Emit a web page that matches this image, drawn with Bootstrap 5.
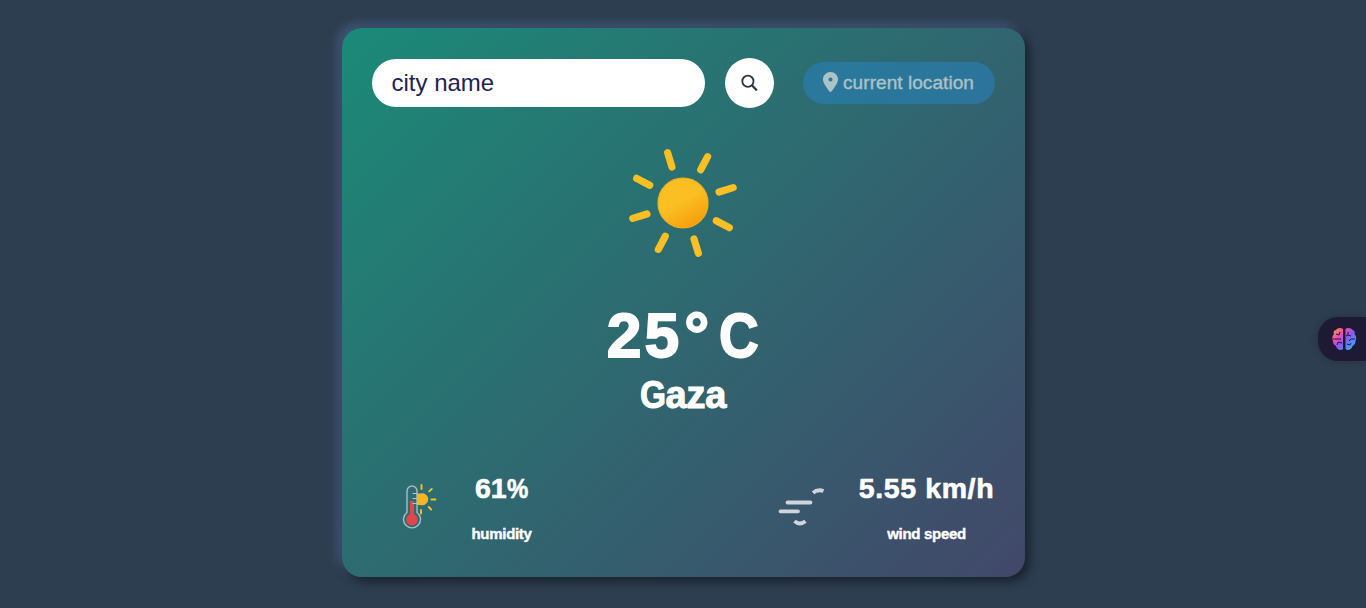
<!DOCTYPE html>
<html lang="en">
<head>
<meta charset="utf-8">
<meta name="viewport" content="width=device-width, initial-scale=1">
<title>Weather</title>
<link href="https://cdn.jsdelivr.net/npm/bootstrap@5.3.0/dist/css/bootstrap.min.css" rel="stylesheet">
<style>
body{background:#2d3e50;height:608px;overflow:hidden;font-family:"Liberation Sans",Arial,sans-serif}
.weather{width:683px;height:549px;margin-top:28px;padding:30px;border-radius:20px;color:#fff;
 background:linear-gradient(135deg,#1b8a77,#424769);
 box-shadow:5px 5px 10px #1a242f,-5px -5px 10px #405577}
.city{width:333px;height:48px;border:0;border-radius:30px;padding:0 20px;font-size:24px;color:#1f2253}
.city::placeholder{color:#1f2253;opacity:1}
.find{width:49px;height:50px;background:#fff;margin-left:20px}
.locate{width:192px;height:42px;border-radius:30px;background:#2980b9;opacity:.6;color:#fff;font-size:19px;margin-left:29px;letter-spacing:.06px;-webkit-text-stroke:.3px #fff}
.bold-text{font-weight:700;line-height:1;white-space:nowrap;-webkit-text-stroke:.4px #fff}
.temp{font-size:62.5px;margin-top:41px;height:64px;-webkit-text-stroke-width:1.8px;letter-spacing:3px}
.degree{letter-spacing:10px;margin-left:2px}
.celsius{display:inline-block;letter-spacing:0;transform:scaleX(.88);transform-origin:left;margin-right:-5px}
.town{font-size:38px;margin-top:8px;letter-spacing:-.2px;-webkit-text-stroke-width:1px}
.town-initial{display:inline-block;transform:scaleX(.88);transform-origin:left;margin-right:-3.5px}
.reading{font-size:28.5px;-webkit-text-stroke-width:.6px}
.pct{display:inline-block;transform:scaleX(.84);transform-origin:left;margin-right:-4px}
.speed{letter-spacing:.6px}
.caption-text{font-size:15px;letter-spacing:-.3px;margin-top:23.5px}
.brain-tab{right:0;top:317px;width:48px;height:44px;background:#1e1a36;border-radius:20px 0 0 20px;box-shadow:0 0 8px #0003}
</style>
</head>
<body>
<main class="weather mx-auto d-flex flex-column">
  <div class="d-flex align-items-center" style="height:50px">
    <input class="city" type="text" placeholder="city name" aria-label="city name">
    <button class="find btn rounded-circle border-0 p-0 d-flex align-items-center justify-content-center" aria-label="Search">
      <svg width="18" height="18" viewBox="0 0 18 18" fill="none" stroke="#2b3544" stroke-width="1.8"><circle cx="7.9" cy="7.2" r="5.6"/><path d="M11.9 11.2 16.9 16.4" stroke-width="2.2"/></svg>
    </button>
    <button class="locate border-0 p-0 d-flex align-items-center justify-content-center">
      <svg style="margin-right:5px;margin-bottom:2px" width="15" height="20" viewBox="0 0 384 512" preserveAspectRatio="none" fill="#fff"><path d="M215.7 499.2C267 435 384 279.4 384 192 384 86 298 0 192 0S0 86 0 192c0 87.4 117 243 168.3 307.2 12.3 15.3 35.1 15.3 47.4 0zM192 140a52 52 0 1 1 0 104 52 52 0 1 1 0-104z"/></svg>
      <span>current location</span>
    </button>
  </div>
  <div class="d-flex justify-content-center" style="margin-top:35px">
    <svg width="120" height="120" viewBox="-60 -60 120 120">
      <defs>
        <linearGradient id="sun" x1=".25" y1=".07" x2=".75" y2=".93"><stop offset="0" stop-color="#fbbf24"/><stop offset=".45" stop-color="#fbbf24"/><stop offset="1" stop-color="#f59e0b"/></linearGradient>
        <path id="ray" d="M0-37.7V-52.5"/>
      </defs>
      <circle r="25" fill="url(#sun)" stroke="#f8af18" stroke-width="1.2"/>
      <g stroke="#fbbf24" stroke-width="7.2" stroke-linecap="round" transform="rotate(-17)">
        <use href="#ray"/><use href="#ray" transform="rotate(45)"/><use href="#ray" transform="rotate(90)"/><use href="#ray" transform="rotate(135)"/><use href="#ray" transform="rotate(180)"/><use href="#ray" transform="rotate(225)"/><use href="#ray" transform="rotate(270)"/><use href="#ray" transform="rotate(315)"/>
      </g>
    </svg>
  </div>
  <div class="temp bold-text text-center">25<span class="degree">°</span><span class="celsius">C</span></div>
  <div class="town bold-text text-center"><span class="town-initial">G</span>aza</div>
  <div class="d-flex justify-content-between" style="margin-top:60px">
    <div class="d-flex">
      <svg width="100" height="70" viewBox="372 474 100 70" fill="none">
        <g stroke="#fbbf24" stroke-width="1.9" stroke-linecap="round"><path d="M421.5 485v4M429.3 491.3l2.500-2.400M431.500 499.500h4M428.700 507l2.400 2.500M421 510v3.500"/></g>
        <path d="M417 493.500h3.500a6 6 0 1 1 0 11.500H417z" fill="#fbb521"/>
        <path d="M407 512.500v-21.500a5 5 0 0 1 10 0v21.500a8.500 8.500 0 1 1-10 0z" stroke="#a8bcc5" stroke-width="1.400"/>
        <path d="M412 501v17" stroke="#e34548" stroke-width="4.200"/><circle cx="412" cy="519.700" r="5.800" fill="#e34548"/>
        <path d="M412.500 493.500h5M412.500 498.500h5M412.500 503.500h5" stroke="#b5c7ce" stroke-width="1.200"/>
      </svg>
      <div class="text-center" style="width:60px">
        <div class="reading bold-text">61<span class="pct">%</span></div>
        <div class="caption-text bold-text">humidity</div>
      </div>
    </div>
    <div class="d-flex">
      <svg width="90" height="70" viewBox="769 474 90 70" fill="none" stroke="#cfd5dd" stroke-width="3.800" stroke-linecap="round">
        <path d="M787.500 502.500h23M780.500 511.300h17.500"/>
        <path d="M813 492.800q4.500-4 10.500-1.800M794.500 521.200q5 4.500 11 0" stroke-linecap="butt" stroke-width="3.800"/>
      </svg>
      <div class="text-center" style="width:136px">
        <div class="reading speed bold-text">5.55 km/h</div>
        <div class="caption-text bold-text">wind speed</div>
      </div>
    </div>
  </div>
</main>
<div class="brain-tab position-fixed">
  <svg width="48" height="44" viewBox="0 0 48 44">
    <defs><linearGradient id="brain" gradientUnits="userSpaceOnUse" x1="16" y1="12" x2="36" y2="32"><stop offset="0" stop-color="#ff9735"/><stop offset=".3" stop-color="#ed4cbb"/><stop offset=".55" stop-color="#8a58ee"/><stop offset="1" stop-color="#27b7ff"/></linearGradient></defs>
    <path fill="url(#brain)" d="M25 12c-2-2-6-1-7 1-2 0-3 3-2 4-2 2-2 5-1 7 0 2 1 4 3 5 1 4 5 5 7 3zM27.500 12c2-2 6-1 7 1 2 0 3 3 2 4 2 2 2 5 1 7 0 2-1 4-3 5-1 4-5 5-7 3z"/>
    <path fill="none" stroke="#1e1a36" stroke-width="1" d="M15 22h8M18 17l3 1 1-3M19 28l1-3 4 1M30 15v3l-2 1M30 18l3 1M37 22h-4l-2 2M29 27l3 1 1-2"/>
  </svg>
</div>
<script src="https://cdn.jsdelivr.net/npm/bootstrap@5.3.0/dist/js/bootstrap.bundle.min.js"></script>
</body>
</html>
